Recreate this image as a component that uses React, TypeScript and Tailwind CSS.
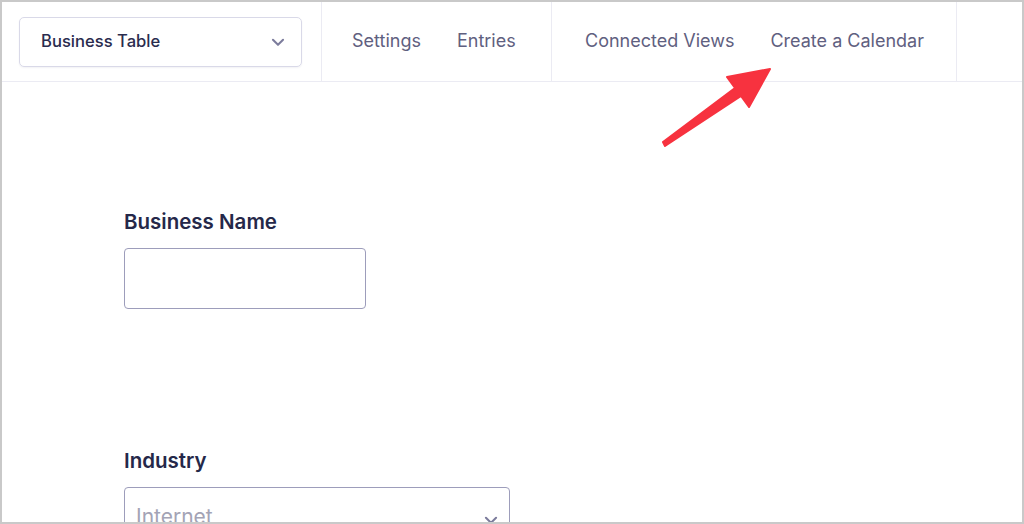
import React from 'react';

const Chevron = ({ className }: { className?: string }) => (
  <svg viewBox="0 0 16 16" className={className} fill="none">
    <path d="M3.5 6l4.5 4.5L12.5 6" stroke="currentColor" strokeWidth="1.8" strokeLinecap="round" strokeLinejoin="round" />
  </svg>
);

const App = () => {
  return (
    <div
      className="relative w-[1024px] h-[524px] overflow-hidden bg-white border-2 border-[#c9c9c9]"
      style={{ fontFamily: 'Inter, "Noto Sans", sans-serif' }}
    >
      {/* top bar */}
      <div className="flex h-[80px] border-b border-[#ebebf3]">
        <div className="w-[320px] shrink-0 flex items-center pl-[17px] pr-[19px] border-r border-[#ebebf3]">
          <div className="w-full h-[50px] flex items-center justify-between pl-[21px] pr-[14px] border border-[#d9d9e8] rounded-[5px] shadow-[0_1px_2px_rgba(40,40,80,0.06)]">
            <span className="text-[16.6px] font-medium text-[#2a2c4e]">Business Table</span>
            <Chevron className="w-[18px] h-[18px] text-[#7c7c9c]" />
          </div>
        </div>
        <div className="w-[230px] shrink-0 flex items-center gap-[36px] pl-[30px] border-r border-[#ebebf3]">
          <span className="text-[18px] text-[#5f6080] -mt-[2px]">Settings</span>
          <span className="text-[18px] text-[#5f6080] -mt-[2px]">Entries</span>
        </div>
        <div className="w-[405px] shrink-0 flex items-center gap-[36px] pl-[33px] border-r border-[#ebebf3]">
          <span className="text-[18px] text-[#5f6080] -mt-[2px]">Connected Views</span>
          <span className="text-[18px] text-[#5f6080] -mt-[2px]">Create a Calendar</span>
        </div>
        <div className="flex-1" />
      </div>

      {/* form */}
      <div className="pl-[122px] pt-[126px] flex flex-col">
        <label className="text-[20.5px] font-semibold text-[#252849] leading-[28px]">Business Name</label>
        <div className="mt-[12px] w-[242px] h-[61px] border-[1.5px] border-[#9d9dbb] rounded-[4px]" />

        <label className="mt-[138px] text-[20.5px] font-semibold text-[#252849] leading-[28px]">Industry</label>
        <div className="mt-[12px] w-[386px] h-[60px] border-[1.5px] border-[#9d9dbb] rounded-[4px] flex items-start justify-between pl-[11px] pr-[9px] pt-[17px]">
          <span className="text-[21px] text-[#a3a3b5] leading-[24px]">Internet</span>
          <Chevron className="w-[18px] h-[18px] text-[#7c7c9c] mt-[6px]" />
        </div>
      </div>

      {/* arrow */}
      <svg className="absolute left-0 top-0 pointer-events-none" width="1024" height="524" viewBox="0 0 1024 524">
        <polygon
          points="661,140 733,86 725,75 768,67 747,105 739,94 663,144"
          fill="#f7323f"
          stroke="#f7323f"
          strokeWidth="2"
          strokeLinejoin="round"
        />
      </svg>
    </div>
  );
};

export default App;
